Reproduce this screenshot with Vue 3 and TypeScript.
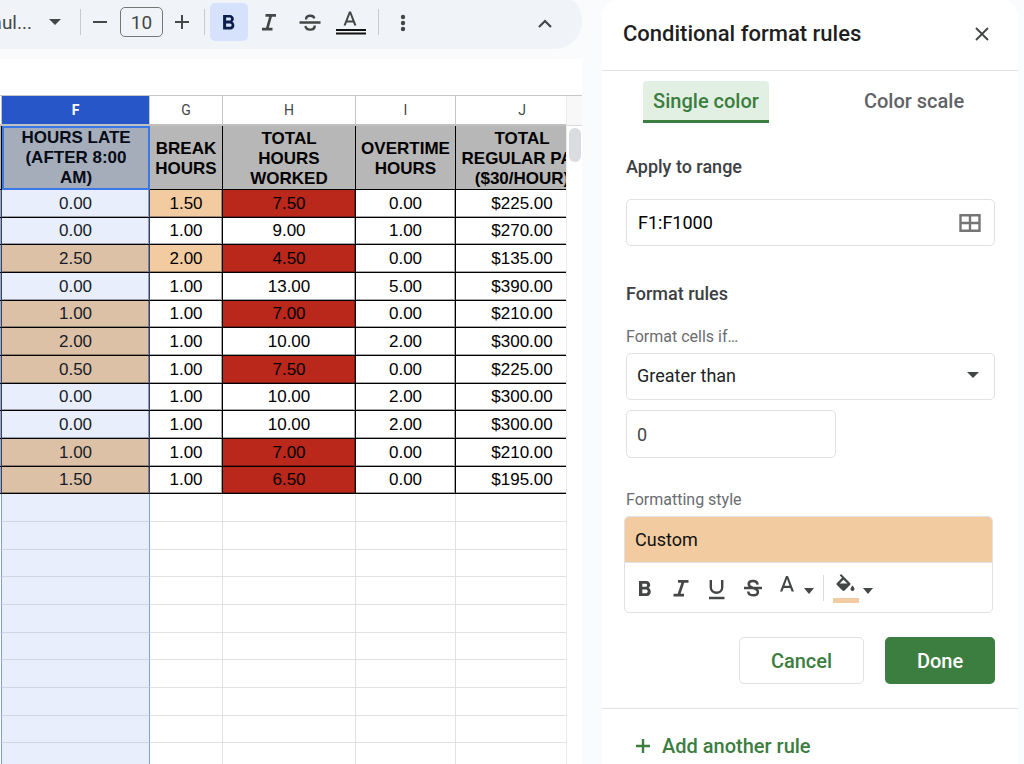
<script setup lang="ts">
import { ref } from 'vue'

interface Row {
  late: string
  breaks: string
  worked: string
  overtime: string
  pay: string
}

const columns = ['F', 'G', 'H', 'I', 'J']

const rows: Row[] = [
  { late: '0.00', breaks: '1.50', worked: '7.50', overtime: '0.00', pay: '$225.00' },
  { late: '0.00', breaks: '1.00', worked: '9.00', overtime: '1.00', pay: '$270.00' },
  { late: '2.50', breaks: '2.00', worked: '4.50', overtime: '0.00', pay: '$135.00' },
  { late: '0.00', breaks: '1.00', worked: '13.00', overtime: '5.00', pay: '$390.00' },
  { late: '1.00', breaks: '1.00', worked: '7.00', overtime: '0.00', pay: '$210.00' },
  { late: '2.00', breaks: '1.00', worked: '10.00', overtime: '2.00', pay: '$300.00' },
  { late: '0.50', breaks: '1.00', worked: '7.50', overtime: '0.00', pay: '$225.00' },
  { late: '0.00', breaks: '1.00', worked: '10.00', overtime: '2.00', pay: '$300.00' },
  { late: '0.00', breaks: '1.00', worked: '10.00', overtime: '2.00', pay: '$300.00' },
  { late: '1.00', breaks: '1.00', worked: '7.00', overtime: '0.00', pay: '$210.00' },
  { late: '1.50', breaks: '1.00', worked: '6.50', overtime: '0.00', pay: '$195.00' },
]

const emptyRows = 10
const fontSize = ref('10')
const range = ref('F1:F1000')
const condition = ref('Greater than')
const threshold = ref('0')
const tab = ref<'single' | 'scale'>('single')
</script>

<template>
  <div class="app">
    <main class="sheet">
      <div class="toolbar" role="toolbar" aria-label="Formatting">
        <button class="font-menu" type="button">
          <span class="font-name">Defaul...</span>
          <svg width="12" height="6" viewBox="0 0 12 6"><path d="M0 0h12L6 6z" fill="currentColor" /></svg>
        </button>
        <span class="sep"></span>
        <button class="tool minus" type="button" aria-label="Decrease font size">
          <svg width="14" height="14" viewBox="0 0 14 14"><path d="M0 7h14" stroke="currentColor" stroke-width="2" /></svg>
        </button>
        <input v-model="fontSize" class="size" aria-label="Font size" />
        <button class="tool" type="button" aria-label="Increase font size">
          <svg width="14" height="14" viewBox="0 0 14 14"><path d="M0 7h14M7 0v14" stroke="currentColor" stroke-width="2" /></svg>
        </button>
        <span class="sep"></span>
        <button class="tool on" type="button" aria-label="Bold">
          <svg width="24" height="24" viewBox="0 0 24 24"><path transform="translate(-.4 1)" d="M15.6 10.79c.97-.67 1.65-1.77 1.65-2.79 0-2.26-1.75-4-4-4H6.500v14.500h7.54c2.09 0 3.71-1.900 3.71-4.090 0-1.520-.86-3.020-2.150-3.620zM9.500 6.500H13c.83 0 1.5.67 1.5 1.5s-.67 1.5-1.5 1.500H9.500v-3zm4 9.300h-4v-3.200h4c.83 0 1.500.75 1.500 1.600s-.67 1.600-1.500 1.600z" fill="currentColor" /></svg>
        </button>
        <button class="tool" type="button" aria-label="Italic">
          <svg width="24" height="24" viewBox="0 0 24 24"><path d="M8.5 5.4H19M5 19.1h10.5M13.9 5.4L10.1 19" stroke="currentColor" stroke-width="2.7" fill="none" /></svg>
        </button>
        <button class="tool" type="button" aria-label="Strikethrough">
          <svg width="24" height="24" viewBox="0 0 24 24"><path d="M1.5 12.500h21M8.100 9.500c-.3-4.600 7.100-5 8.300-1.200M7.400 16c1 5.200 9.500 4.700 9.300-.5" stroke="currentColor" stroke-width="2.400" fill="none" /></svg>
        </button>
        <button class="tool text-color" type="button" aria-label="Text color">
          <svg width="32" height="26" viewBox="0 0 32 26"><path transform="translate(3 1)" d="M11 1.500L5.500 15.500h2.250l1.120-3h6.250l1.120 3h2.250L13 1.500h-2zm-1.380 9L12 4.170 14.380 10.500H9.620z" fill="currentColor" /><path d="M1 21h30M1 24.500h30" stroke="#111" stroke-width="2" /></svg>
        </button>
        <span class="sep"></span>
        <button class="tool more" type="button" aria-label="More">
          <svg width="24" height="24" viewBox="0 0 24 24" fill="currentColor"><circle cx="12" cy="7" r="2.200" /><circle cx="12" cy="13" r="2.200" /><circle cx="12" cy="19" r="2.200" /></svg>
        </button>
        <button class="tool collapse" type="button" aria-label="Hide the menus">
          <svg width="24" height="24" viewBox="0 0 24 24"><path d="M6 17l6-6 6 6" stroke="currentColor" stroke-width="2.200" fill="none" /></svg>
        </button>
      </div>

      <div class="formula-bar"></div>

      <div class="grid-area">
        <div class="grid-clip">
          <table class="grid">
            <colgroup>
              <col class="c-e" /><col class="c-f" /><col class="c-g" /><col class="c-h" /><col class="c-i" /><col class="c-j" />
            </colgroup>
            <thead>
              <tr>
                <th></th>
                <th v-for="c in columns" :key="c" scope="col" :class="{ active: c === 'F' }">{{ c }}</th>
              </tr>
            </thead>
            <tbody>
              <tr class="titles">
                <td></td>
                <td class="sel">HOURS LATE<br />(AFTER 8:00<br />AM)</td>
                <td>BREAK<br />HOURS</td>
                <td>TOTAL<br />HOURS<br />WORKED</td>
                <td>OVERTIME<br />HOURS</td>
                <td>TOTAL<br />REGULAR PAY<br />($30/HOUR)</td>
              </tr>
            </tbody>
            <tbody class="body">
              <tr v-for="(r, i) in rows" :key="i" class="data">
                <td></td>
                <td class="sel" :class="{ flag: Number(r.late) > 0 }">{{ r.late }}</td>
                <td :class="{ flag: Number(r.breaks) > 1 }">{{ r.breaks }}</td>
                <td :class="{ alert: Number(r.worked) < 8 }">{{ r.worked }}</td>
                <td>{{ r.overtime }}</td>
                <td>{{ r.pay }}</td>
              </tr>
              <tr v-for="n in emptyRows" :key="'e' + n" class="empty">
                <td></td><td class="sel"></td><td></td><td></td><td></td><td></td>
              </tr>
            </tbody>
          </table>
        </div>
        <div class="scroll">
          <div class="scroll-head"></div>
          <div class="thumb"></div>
        </div>
      </div>
    </main>

    <aside class="panel">
      <header class="panel-head">
        <h2>Conditional format rules</h2>
        <button class="close" type="button" aria-label="Close">
          <svg width="14" height="14" viewBox="0 0 14 14"><path d="M1 1l12 12M13 1L1 13" stroke="currentColor" stroke-width="1.900" /></svg>
        </button>
      </header>

      <div class="tabs" role="tablist">
        <div class="tab-slot">
          <button type="button" role="tab" :class="{ current: tab === 'single' }" :aria-selected="tab === 'single'" @click="tab = 'single'">Single color</button>
        </div>
        <div class="tab-slot">
          <button type="button" role="tab" :class="{ current: tab === 'scale' }" :aria-selected="tab === 'scale'" @click="tab = 'scale'">Color scale</button>
        </div>
      </div>

      <form class="rule" @submit.prevent>
        <label class="heading" for="range">Apply to range</label>
        <div class="field range">
          <input id="range" v-model="range" />
          <button type="button" aria-label="Select data range">
            <svg width="22" height="18" viewBox="0 0 22 18"><path d="M1.500 1.300h19v15.400h-19zM1.500 9h19M11 1.300v15.400" stroke="currentColor" stroke-width="2.400" fill="none" /></svg>
          </button>
        </div>

        <h3 class="heading">Format rules</h3>
        <label class="caption" for="condition">Format cells if…</label>
        <div class="field condition">
          <select id="condition" v-model="condition">
            <option>Greater than</option>
            <option>Less than</option>
          </select>
          <svg class="caret" width="12" height="6" viewBox="0 0 12 6"><path d="M0 0h12L6 6z" fill="currentColor" /></svg>
        </div>
        <input v-model="threshold" class="field threshold" aria-label="Value" />

        <span class="caption style-caption">Formatting style</span>
        <div class="style-box">
          <button class="preview" type="button">Custom</button>
          <div class="style-tools">
            <button type="button" aria-label="Bold">
              <svg width="24" height="24" viewBox="0 0 24 24"><path d="M15.600 11.790c.97-.67 1.650-1.770 1.650-2.790 0-2.260-1.750-4-4-4H6v15h8.040c2.090 0 3.710-1.900 3.710-4.290 0-1.520-.86-3.320-2.150-3.920zM9.300 7.800h3.500c.83 0 1.300.57 1.300 1.400s-.47 1.500-1.300 1.500H9.300zm3.900 9.400H9.300v-3.700h3.900c.83 0 1.500 1.020 1.500 1.850s-.67 1.850-1.500 1.850z" fill="currentColor" /></svg>
            </button>
            <button type="button" aria-label="Italic">
              <svg width="24" height="24" viewBox="0 0 24 24"><path d="M9 5.400h10.500M4.500 19.100H15M14.300 5.400L9.700 19" stroke="currentColor" stroke-width="2.700" fill="none" /></svg>
            </button>
            <button type="button" aria-label="Underline">
              <svg width="24" height="24" viewBox="0 0 24 24"><path d="M5.800 4v7.500c0 7 11.400 7 11.400 0V4M4 22h15.500" stroke="currentColor" stroke-width="2.400" fill="none" /></svg>
            </button>
            <button type="button" aria-label="Strikethrough">
              <svg width="24" height="24" viewBox="0 0 24 24"><path d="M3 12h18M16.600 8.600c-.3-4.700-8.700-4.600-8.900-.6 0 2 1.300 3 4.300 4 3.500 1 5 2 4.900 4-.3 4.500-9.200 4.500-9.700-.5" stroke="currentColor" stroke-width="2.500" fill="none" /></svg>
            </button>
            <button class="with-caret" type="button" aria-label="Text color">
              <svg width="14" height="24" viewBox="5 0 14 24"><path d="M11 0L5 15.500h2.400l1.300-3.500h6.600l1.300 3.500H19L13 0h-2zm-1.500 9.700L12 2.900l2.500 6.800z" fill="currentColor" /></svg>
              <svg class="low" width="10" height="6" viewBox="0 0 10 6"><path d="M0 0h10L5 6z" fill="currentColor" /></svg>
            </button>
            <span class="sep"></span>
            <button class="with-caret" type="button" aria-label="Fill color">
              <svg width="26" height="30" viewBox="0 0 26 30"><path transform="translate(.5 1)" d="M16.560 8.940L7.620 0 6.210 1.410l2.380 2.380-5.150 5.150c-.59.59-.59 1.540 0 2.120l5.500 5.500c.29.29.68.44 1.060.44s.77-.15 1.060-.44l5.500-5.500c.59-.58.59-1.530 0-2.120zM6.200 9.500L10 5.700l3.800 3.800zM19 11.500s-2 2.170-2 3.500c0 1.100.9 2 2 2s2-.9 2-2c0-1.330-2-3.500-2-3.500z" fill="currentColor" /><path d="M0 25h26v5H0z" fill="#f2cca0" /></svg>
              <svg class="low" width="10" height="6" viewBox="0 0 10 6"><path d="M0 0h10L5 6z" fill="currentColor" /></svg>
            </button>
          </div>
        </div>

        <div class="actions">
          <button class="cancel" type="button">Cancel</button>
          <button class="done" type="submit">Done</button>
        </div>
      </form>

      <button class="add" type="button">
        <svg width="14" height="14" viewBox="0 0 14 14"><path d="M0 7h14M7 0v14" stroke="currentColor" stroke-width="2.400" /></svg>
        Add another rule
      </button>
    </aside>
  </div>
</template>

<style>
body {
  margin: 0;
}
</style>

<style scoped>
* {
  box-sizing: border-box;
}
.app {
  display: flex;
  gap: 20px;
  height: 100vh;
  padding-right: 6px;
  overflow: hidden;
  background: #f9fbfd;
  font-family: Roboto, "Liberation Sans", sans-serif;
  color: #444746;
}
button,
input,
select {
  margin: 0;
  padding: 0;
  border: 0;
  background: none;
  font: inherit;
  color: inherit;
}
button {
  cursor: pointer;
}
svg {
  display: block;
  flex: none;
}
.sheet {
  flex: 1;
  min-width: 0;
  display: flex;
  flex-direction: column;
}
.toolbar {
  flex: none;
  display: flex;
  align-items: center;
  height: 49px;
  padding: 0 18px 5px 0;
  background: #f0f4f9;
  border-radius: 0 12px 27px 0 / 0 22px 27px 0;
}
.font-menu {
  display: flex;
  align-items: center;
  justify-content: space-between;
  width: 80px;
  padding-right: 19px;
  font-size: 19px;
}
.font-name {
  display: flex;
  justify-content: flex-end;
  width: 32px;
  overflow: hidden;
}
.sep {
  flex: none;
  width: 1px;
  height: 26px;
  background: #c7cbcf;
}
.tool {
  display: flex;
  align-items: center;
  justify-content: center;
  flex: none;
  width: 38px;
  height: 38px;
  margin-right: 3px;
  border-radius: 5px;
}
.tool.minus {
  margin-right: 1px;
}
.tool.on {
  margin: 0 2px 0 5px;
  background: #d6e2fb;
  color: #0b1d4d;
}
.tool.text-color {
  margin-right: 8px;
}
.tool.more {
  margin-left: 5px;
}
.size {
  width: 43px;
  height: 30px;
  border: 1px solid #747775;
  border-radius: 5px;
  font-size: 19px;
  text-align: center;
}
.tool.collapse {
  margin: 0 0 0 auto;
}
.formula-bar {
  flex: none;
  height: 37px;
  margin-top: 10px;
  background: #fff;
  border-bottom: 1px solid #c4c7c5;
}
.grid-area {
  flex: 1;
  min-height: 0;
  display: flex;
  background: #fff;
}
.grid-clip {
  flex: 1;
  min-width: 0;
  overflow: hidden;
}
.grid {
  width: 589px;
  table-layout: fixed;
  border-collapse: separate;
  border-spacing: 0;
  font-family: "Liberation Sans", Arial, sans-serif;
  font-size: 17px;
  line-height: 20px;
  text-align: center;
  color: #000;
}
.c-e { width: 2px; }
.c-f { width: 148px; }
.c-g { width: 73px; }
.c-h { width: 133px; }
.c-i { width: 100px; }
.c-j { width: 133px; }
.grid th {
  height: 30px;
  padding: 0;
  border-right: 1px solid #c4c7c5;
  border-bottom: 2px solid #c0c2c2;
  font-family: Roboto, sans-serif;
  font-size: 14px;
  font-weight: 400;
  color: #444746;
}
.grid th.active {
  background: #2756c8;
  color: #fff;
  font-weight: 700;
}
.grid td {
  padding: 0;
  border-right: 1px solid #000;
  border-bottom: 1px solid #000;
  white-space: nowrap;
}
.grid .titles td {
  height: 64px;
  padding-top: 3px;
  background: #b7b7b7;
  font-weight: 700;
}
.grid .titles .sel {
  padding-top: 0;
  background: #a6adba;
  color: #050c18;
  border: 2px solid #3b78e7;
}
.body tr {
  height: 28px;
}
.body tr:nth-child(3n + 2) {
  height: 27px;
}
.data td {
  box-shadow: inset -1px -1px rgba(0, 0, 0, 0.35);
}
.data .flag {
  background: #f2cca0;
}
.data .alert {
  background: #ba271b;
}
.grid .body .sel {
  background: #e8eefb;
  color: #171c28;
  border-right-color: #2b4480;
}
.grid .body .sel.flag {
  background: #dcc1a6;
}
.grid .body td:first-child {
  border-right-color: #2b4480;
}
.grid .empty td {
  border-color: #e1e1e1;
}
.grid .body .empty .sel {
  border-bottom-color: #cfd5e1;
  border-right-color: #7d9ee3;
}
.grid .body .empty td:first-child {
  border-right-color: #7d9ee3;
}
.scroll {
  flex: none;
  width: 16px;
  border-left: 1px solid #e8eaed;
}
.scroll-head {
  height: 30px;
  background: #f8f8f8;
  border-bottom: 1px solid #d9dadf;
}
.thumb {
  width: 12px;
  height: 34px;
  margin: 2px auto 0;
  border-radius: 6px;
  background: #dadce0;
}
.panel {
  flex: none;
  width: 416px;
  display: flex;
  flex-direction: column;
  background: #fff;
  border-radius: 16px 16px 0 0;
}
.panel-head {
  flex: none;
  display: flex;
  align-items: center;
  justify-content: space-between;
  height: 71px;
  padding: 0 29px 3px 21px;
  border-bottom: 1px solid #e1e3e6;
}
.panel-head h2 {
  margin: 0;
  font-size: 22px;
  line-height: 28px;
  font-weight: 500;
  color: #1f1f1f;
}
.tabs {
  flex: none;
  display: flex;
  padding-top: 10px;
}
.tab-slot {
  flex: 1;
  display: flex;
  justify-content: center;
}
.tabs button {
  height: 42px;
  padding: 0 10px;
  border-bottom: 3px solid transparent;
  border-radius: 4px 4px 0 0;
  font-size: 20px;
  font-weight: 500;
  color: #5f6368;
}
.tabs .current {
  background: #e2f0e3;
  border-bottom-color: #3c7d40;
  color: #3c7d40;
}
.rule {
  flex: none;
  display: flex;
  flex-direction: column;
  padding: 32px 23px 24px 24px;
  border-bottom: 1px solid #e1e3e6;
}
.heading {
  margin: 0 0 20px;
  font-size: 18px;
  line-height: 24px;
  font-weight: 500;
  color: #3c4043;
}
.field {
  height: 47px;
  border: 1px solid #dfe1e5;
  border-radius: 5px;
  font-size: 18px;
}
.range {
  display: flex;
  align-items: center;
  padding: 0 13px 0 11px;
  margin-bottom: 36px;
  color: #000;
}
.range input {
  flex: 1;
  min-width: 0;
}
.range button {
  color: #757575;
}
h3.heading {
  margin-bottom: 21px;
}
.caption {
  font-size: 16px;
  line-height: 20px;
  margin-bottom: 6px;
  color: #6a6d70;
}
.condition {
  position: relative;
  margin-bottom: 10px;
  color: #202124;
}
.condition select {
  width: 100%;
  height: 100%;
  padding: 0 10px 2px;
  appearance: none;
}
.caret {
  position: absolute;
  right: 15px;
  top: 18px;
  pointer-events: none;
  color: #444746;
}
.threshold {
  width: 57%;
  height: 48px;
  padding: 0 10px;
}
.style-caption {
  margin-top: 32px;
}
.style-box {
  display: flex;
  flex-direction: column;
  margin: 0 2px 24px -2px;
  border: 1px solid #dfe1e5;
  border-radius: 5px;
  overflow: hidden;
}
.preview {
  height: 46px;
  padding: 0 10px;
  background: #f2cca0;
  border-bottom: 1px solid #dfe1e5;
  font-size: 18px;
  text-align: left;
  color: #111;
}
.style-tools {
  display: flex;
  align-items: center;
  height: 49px;
  padding-left: 2px;
}
.style-tools button {
  display: flex;
  align-items: center;
  justify-content: center;
  width: 36px;
  height: 36px;
}
.style-tools .with-caret {
  gap: 10px;
  width: 52px;
}
.style-tools .sep {
  background: #dadce0;
}
.style-tools .sep + .with-caret {
  gap: 4px;
  width: 58px;
}
.low {
  margin-top: 6px;
}
.actions {
  display: flex;
  justify-content: flex-end;
  gap: 21px;
}
.actions button {
  height: 47px;
  border-radius: 5px;
  font-size: 20px;
  font-weight: 500;
}
.actions .cancel {
  width: 125px;
  border: 1px solid #dfe1e5;
  color: #3c7d40;
}
.actions .done {
  width: 110px;
  background: #3c7d40;
  color: #fff;
}
.add {
  flex: none;
  display: flex;
  align-items: center;
  align-self: flex-start;
  gap: 12px;
  padding: 24px 34px;
  font-size: 20px;
  line-height: 26px;
  font-weight: 500;
  color: #3c7d40;
}
</style>
